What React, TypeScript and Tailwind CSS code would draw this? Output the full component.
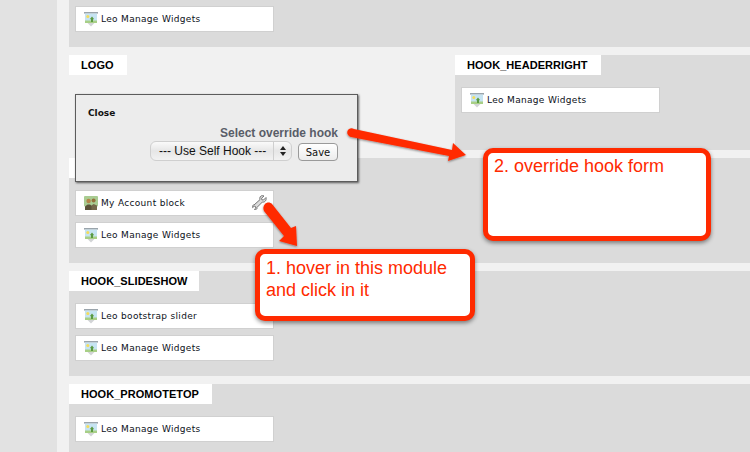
import React from "react";

function SliderIcon() {
  return (
    <svg width="14" height="15" viewBox="0 0 14 15" className="shrink-0">
      <rect x="0" y="0" width="14" height="1.6" fill="#9aa4ab" />
      <rect x="1" y="1.6" width="12" height="9.4" fill="#c6e4f2" />
      <rect x="1" y="8.5" width="12" height="2.5" fill="#a8cf86" />
      <circle cx="3.8" cy="4.6" r="1.5" fill="#f5dc5a" />
      <path d="M8 4.5 L10.2 7.2 L9 7.2 L9 10 L7 10 L7 7.2 L5.8 7.2 Z" fill="#5a9a42" />
      <path d="M3.5 11 H10.5 L7 14.5 Z" fill="#d2d4d6" />
    </svg>
  );
}

function AccountIcon() {
  return (
    <svg width="14" height="14" viewBox="0 0 14 14" className="shrink-0">
      <rect x="0" y="0" width="14" height="10.5" rx="1" fill="#a9cc92" />
      <circle cx="4.6" cy="5" r="2.2" fill="#b5854a" />
      <circle cx="9.6" cy="4.6" r="2" fill="#94703c" />
      <path d="M1 14 V10.5 L3.6 8.5 H6 L8 10 V14 Z" fill="#5a5238" />
      <path d="M7.5 14 V9.5 L9.6 8 L13 9.5 V14 Z" fill="#74684a" />
    </svg>
  );
}

function WrenchIcon() {
  return (
    <svg width="15" height="15" viewBox="0 0 15 15" className="absolute right-[6px] top-[4px]">
      <path
        d="M14 2.5 L11.5 5 L9.8 4.8 L9.6 3.2 L12 1 C10 0 8 1 7.8 3 C7.7 4 8 4.6 8 4.6 L2 10 C0.8 9.8 0 11 0.6 12.6 L2.2 11.2 L3.6 11.6 L3.8 13 L2.4 14.4 C4 15 5.4 14 5 12.4 L10.4 7 C12.6 7.6 14.8 5.4 14 2.5 Z"
        fill="#dcdcdc"
        stroke="#757575"
        strokeWidth="1"
        strokeLinejoin="round"
      />
    </svg>
  );
}

function ModuleCard({ name, icon, tool }: { name: string; icon?: "account"; tool?: boolean }) {
  return (
    <div className="relative flex h-[26px] w-[199px] items-center gap-[3px] border border-[#d0d0d0] bg-white pl-[8px] font-['DejaVu_Sans',sans-serif] text-[9px] text-[#0c1020]">
      {icon === "account" ? <AccountIcon /> : <SliderIcon />}
      <span className="pt-[2px] tracking-[0.32px]">{name}</span>
      {tool && <WrenchIcon />}
    </div>
  );
}

function Tab({ label, width }: { label?: string; width: string }) {
  return (
    <div
      className={`flex h-[20px] items-center bg-white pl-[12px] font-['Liberation_Sans',sans-serif] text-[11px] font-bold tracking-[0.05px] text-black ${width}`}
    >
      {label}
    </div>
  );
}

function Hook({
  label,
  width,
  children,
  className,
}: {
  label?: string;
  width: string;
  children: React.ReactNode;
  className: string;
}) {
  return (
    <section className={`bg-[#dbdbdb] ${className}`}>
      <Tab label={label} width={width} />
      <div className="flex flex-col gap-[6px] pl-[6px] pt-[12px]">{children}</div>
    </section>
  );
}

function OverrideForm() {
  return (
    <div className="absolute left-[75px] top-[94px] flex h-[88px] w-[283px] flex-col border border-[#5c5c5c] bg-[#ececec] pr-[19px] shadow-[1px_1px_2px_rgba(0,0,0,0.6)] font-['Liberation_Sans',sans-serif]">
      <div className="pl-[12px] pt-[12px] font-['DejaVu_Sans',sans-serif] text-[9px] font-bold leading-[12px] text-[#111]">
        Close
      </div>
      <div className="mt-[7px] text-right text-[12px] font-bold leading-[14px] text-[#595d68]">
        Select override hook
      </div>
      <div className="mt-[1px] flex items-start justify-end gap-[6px]">
        <div className="flex h-[20px] w-[142px] items-center rounded-[6px] border border-[#cfcfcf] bg-gradient-to-b from-[#fafafa] via-[#e6e6e6] to-[#f2f2f2] text-[12px] text-[#111]">
          <span className="flex-1 pl-[8px]">--- Use Self Hook ---</span>
          <span className="flex h-full w-[18px] flex-col items-center justify-center gap-[2px] border-l border-[#cfcfcf]">
            <span className="h-0 w-0 border-x-[3px] border-b-[4px] border-x-transparent border-b-[#222]" />
            <span className="h-0 w-0 border-x-[3px] border-t-[4px] border-x-transparent border-t-[#222]" />
          </span>
        </div>
        <button className="mt-[2px] h-[18px] w-[40px] rounded-[4px] border border-[#9a9a9a] bg-gradient-to-b from-white to-[#ececec] font-['DejaVu_Sans',sans-serif] text-[10px] text-[#111]">
          Save
        </button>
      </div>
    </div>
  );
}

function Callout({ className, children }: { className: string; children: React.ReactNode }) {
  return (
    <div
      className={`absolute rounded-[10px] border-[5px] border-[#ff2a00] bg-white px-[6px] font-['Liberation_Sans',sans-serif] text-[18px] leading-[22px] text-[#ff2a00] shadow-[0_2px_4px_rgba(0,0,0,0.45)] ${className}`}
    >
      {children}
    </div>
  );
}

function Arrows() {
  return (
    <svg width="750" height="452" viewBox="0 0 750 452" className="pointer-events-none absolute left-0 top-0">
      <defs>
        <filter id="arrow-shadow" x="-20%" y="-20%" width="140%" height="140%">
          <feDropShadow dx="0" dy="1" stdDeviation="1" floodColor="#000" floodOpacity="0.45" />
        </filter>
      </defs>
      <g fill="#ff2a00" filter="url(#arrow-shadow)">
        <path d="M349 129 C351 128 352 128 354 129 L452 150 L453 143 L466 155 L448 161 L449 156 L351 137 C347 136 346 131 349 129 Z" />
        <path d="M265 204 C267 202 270 202 272 204 L291 228 L296 226 L297 246 L279 241 L284 236 L264 211 C263 209 263 206 265 204 Z" />
      </g>
    </svg>
  );
}

export default function App() {
  return (
    <div className="relative flex h-[452px] w-[750px] overflow-hidden bg-[#f1f1f1]">
      <div className="w-[57px] shrink-0 bg-[#e2e2e2]" />
      <div className="ml-[12px] flex min-w-0 flex-1 flex-col">
        <div className="h-[47px] bg-[#dbdbdb] pl-[6px] pt-[6px]">
          <ModuleCard name="Leo Manage Widgets" />
        </div>

        <div className="mt-[8px] flex h-[95px]">
          <div className="w-[386px]">
            <Tab label="LOGO" width="w-[58px]" />
          </div>
          <Hook label="HOOK_HEADERRIGHT" width="w-[146px]" className="flex-1">
            <ModuleCard name="Leo Manage Widgets" />
          </Hook>
        </div>

        <Hook width="w-[120px]" className="mt-[8px] h-[105px]">
          <ModuleCard name="My Account block" icon="account" tool />
          <ModuleCard name="Leo Manage Widgets" />
        </Hook>

        <Hook label="HOOK_SLIDESHOW" width="w-[130px]" className="mt-[8px] h-[105px]">
          <ModuleCard name="Leo bootstrap slider" />
          <ModuleCard name="Leo Manage Widgets" />
        </Hook>

        <Hook label="HOOK_PROMOTETOP" width="w-[143px]" className="mt-[8px] flex-1">
          <ModuleCard name="Leo Manage Widgets" />
        </Hook>
      </div>

      <OverrideForm />
      <Arrows />
      <Callout className="left-[483px] top-[148px] h-[93px] w-[228px] pt-[2px]">2. override hook form</Callout>
      <Callout className="left-[255px] top-[249px] h-[72px] w-[220px] pt-[3px]">
        1. hover in this module
        <br />
        and click in it
      </Callout>
    </div>
  );
}
